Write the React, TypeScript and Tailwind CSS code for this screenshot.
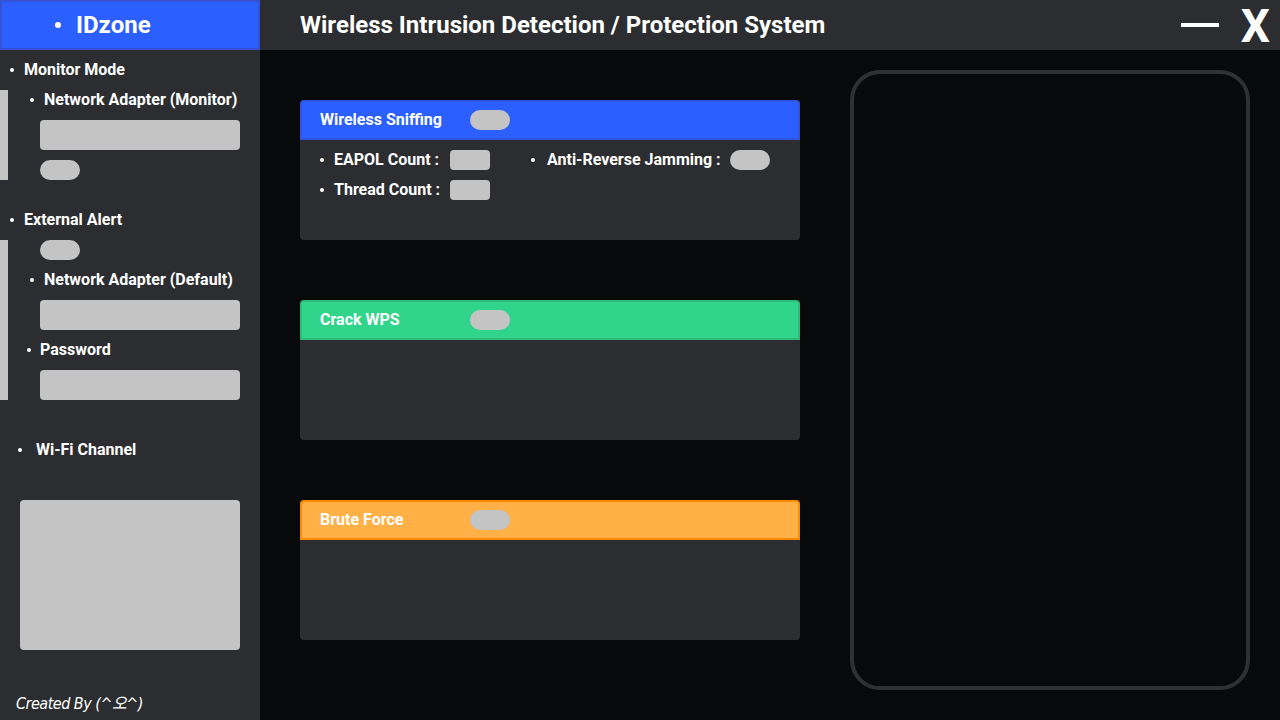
import type { ReactNode } from "react";

const font = "font-['Roboto','Liberation_Sans',sans-serif]";

function Dot({ size = 4 }: { size?: number }) {
  return (
    <span
      className={size === 6 ? "inline-block w-[6px] h-[6px] rounded-full bg-white shrink-0" : "inline-block w-[4px] h-[4px] rounded-full bg-white shrink-0"}
    />
  );
}

function Label({ children, gap = "ml-[10px]", dotLeft }: { children: ReactNode; gap?: string; dotLeft: string }) {
  return (
    <div className={`flex items-center h-[20px] ${dotLeft}`}>
      <Dot />
      <span className={`${gap} text-[16px] font-bold text-white leading-[20px]`}>{children}</span>
    </div>
  );
}

function Field() {
  return <div className="w-[200px] h-[30px] rounded-[4px] bg-[#c4c4c4]" />;
}

function Pill() {
  return <div className="w-[40px] h-[20px] rounded-full bg-[#c4c4c4]" />;
}

function Box() {
  return <div className="w-[40px] h-[20px] rounded-[4px] bg-[#c4c4c4]" />;
}

function Card({
  title,
  head,
  children,
}: {
  title: string;
  head: string;
  children?: ReactNode;
}) {
  return (
    <div className="w-[500px] h-[140px] flex flex-col">
      <div className={`h-[40px] shrink-0 rounded-t-[4px] border-2 flex items-center pl-[18px] ${head}`}>
        <span className="w-[150px] text-[16px] font-bold text-white">{title}</span>
        <Pill />
      </div>
      <div className="flex-1 bg-[#2c2d30] rounded-b-[4px]">{children}</div>
    </div>
  );
}

export default function App() {
  return (
    <div className={`w-[1280px] h-[720px] flex flex-col bg-[#08090b] ${font} overflow-hidden`}>
      {/* top bar */}
      <div className="h-[50px] shrink-0 flex items-center bg-[#2c2d30]">
        <div className="w-[260px] h-[50px] bg-[#2b5fff] border-2 border-[#3552d4] flex items-center pl-[53px]">
          <Dot size={6} />
          <span className="ml-[15px] text-[24px] font-bold text-white leading-none">IDzone</span>
        </div>
        <h1 className="ml-[40px] text-[24px] font-bold text-white">
          Wireless Intrusion Detection / Protection System
        </h1>
        <div className="ml-auto flex items-center mr-[10px]">
          <div className="w-[38px] h-[4px] bg-white" />
          <span className="ml-[22px] text-[46px] font-bold text-white leading-none mt-[2px]">X</span>
        </div>
      </div>

      <div className="flex-1 flex">
        {/* sidebar */}
        <aside className="w-[260px] shrink-0 bg-[#2c2d30] flex flex-col pt-[10px]">
          <Label dotLeft="pl-[10px]">Monitor Mode</Label>

          <div className="flex mt-[10px]">
            <div className="w-[8px] h-[90px] bg-[#c4c4c4]" />
            <div className="flex flex-col">
              <Label dotLeft="pl-[22px]">Network Adapter (Monitor)</Label>
              <div className="ml-[32px] mt-[10px]">
                <Field />
              </div>
              <div className="ml-[32px] mt-[10px]">
                <Pill />
              </div>
            </div>
          </div>

          <div className="mt-[30px]">
            <Label dotLeft="pl-[10px]">External Alert</Label>
          </div>

          <div className="flex mt-[10px]">
            <div className="w-[8px] h-[160px] bg-[#c4c4c4]" />
            <div className="flex flex-col">
              <div className="ml-[32px]">
                <Pill />
              </div>
              <div className="mt-[10px]">
                <Label dotLeft="pl-[22px]">Network Adapter (Default)</Label>
              </div>
              <div className="ml-[32px] mt-[10px]">
                <Field />
              </div>
              <div className="mt-[10px]">
                <Label dotLeft="pl-[19px]" gap="ml-[9px]">Password</Label>
              </div>
              <div className="ml-[32px] mt-[10px]">
                <Field />
              </div>
            </div>
          </div>

          <div className="mt-[40px]">
            <Label dotLeft="pl-[18px]" gap="ml-[14px]">Wi-Fi Channel</Label>
          </div>

          <div className="ml-[20px] mt-[40px] w-[220px] h-[150px] rounded-[4px] bg-[#c4c4c4]" />

          <div className="ml-[16px] mt-[44px] text-[16px] italic text-white leading-[20px] tracking-[-0.5px] font-stretch-condensed font-['DejaVu_Sans','Noto_Sans_CJK_KR',sans-serif]">
            Created By (^오^)
          </div>
        </aside>

        {/* main */}
        <main className="flex-1 flex">
          <div className="ml-[40px] mt-[50px] flex flex-col gap-[60px]">
            <Card title="Wireless Sniffing" head="bg-[#2b5fff] border-[#2f55e0]">
              <div className="flex pt-[10px]">
                <div className="w-[231px] flex flex-col gap-[10px]">
                  <div className="flex items-center pl-[20px]">
                    <Dot />
                    <span className="ml-[10px] w-[116px] text-[16px] font-bold text-white leading-[20px]">EAPOL Count :</span>
                    <Box />
                  </div>
                  <div className="flex items-center pl-[20px]">
                    <Dot />
                    <span className="ml-[10px] w-[116px] text-[16px] font-bold text-white leading-[20px]">Thread Count :</span>
                    <Box />
                  </div>
                </div>
                <div className="flex items-center h-[20px]">
                  <Dot />
                  <span className="ml-[12px] mr-[9px] text-[16px] font-bold text-white leading-[20px]">Anti-Reverse Jamming :</span>
                  <Pill />
                </div>
              </div>
            </Card>
            <Card title="Crack WPS" head="bg-[#30d48a] border-[#2bbd78]" />
            <Card title="Brute Force" head="bg-[#ffb047] border-[#ff8a00]" />
          </div>

          <div className="ml-[50px] mt-[20px] w-[400px] h-[620px] rounded-[30px] border-4 border-[#2f3033] bg-[#08090b]" />
        </main>
      </div>
    </div>
  );
}
